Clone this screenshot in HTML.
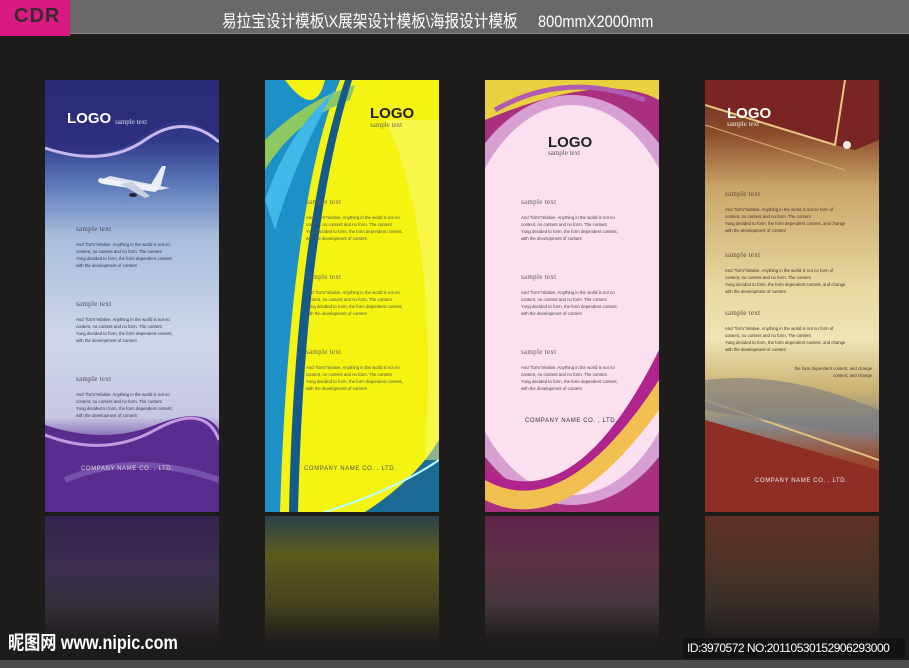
<!DOCTYPE html>
<html><head><meta charset="utf-8"><style>
*{margin:0;padding:0;box-sizing:border-box}
body{width:909px;height:668px;background:#1e1b1b;position:relative;overflow:hidden;font-family:"Liberation Sans","Noto Sans CJK SC",sans-serif}
.hdr{position:absolute;left:0;top:0;width:909px;height:34px;background:#6a6868;border-bottom:1px solid #888}
.cdr{position:absolute;left:0;top:0;width:70px;height:36px;background:#d81a82;color:#3a2a30;font:bold 20px "Liberation Sans",sans-serif;padding:5px 0 0 14px;letter-spacing:1px}
.title{position:absolute;left:222px;top:7px;color:#fff;font-size:17px;white-space:nowrap;transform:scaleX(.86);transform-origin:left}
.p{position:absolute;top:80px;width:174px;height:432px;overflow:hidden}
.p .t{position:absolute;font:7px "Liberation Serif",serif;letter-spacing:.3px}
.p .b{position:absolute;font:4.3px/7px "Liberation Sans",sans-serif;width:120px}
.p .logo{position:absolute;font:bold 15px "Liberation Sans",sans-serif;letter-spacing:0}
.p .st{position:absolute;font:7px "Liberation Serif",serif}
.p .c{position:absolute;font:6px "Liberation Sans",sans-serif;letter-spacing:.6px}
.r{position:absolute;top:516px;width:174px;height:126px;opacity:.5}
</style></head><body>
<div class="hdr"></div>
<div class="cdr">CDR</div>
<div class="title">易拉宝设计模板\X展架设计模板\海报设计模板&nbsp;&nbsp;&nbsp;&nbsp;&nbsp;800mmX2000mm</div>

<!-- panel 1 -->
<div class="p" style="left:45px;background:linear-gradient(#2d2e78 0%,#323a8a 14%,#5a78b8 24%,#a8bcdc 36%,#cfd6ea 60%,#c7c6e4 78%,#5a2f8f 86%,#4a2a86 100%)">
<svg width="174" height="432" style="position:absolute;left:0;top:0">
<path d="M0 70 Q60 85 100 55 T174 60 L174 0 L0 0Z" fill="#2b2a78" opacity=".7"/>
<path d="M0 68 Q60 88 100 60 T174 62" stroke="#c8b8ec" stroke-width="3" fill="none"/>
<path d="M0 345 Q60 365 110 345 T174 350 L174 432 L0 432Z" fill="#5a2c90"/>
<path d="M0 355 Q60 378 110 350 T174 360" stroke="#c49ae0" stroke-width="3" fill="none"/>
<path d="M20 400 Q90 370 174 400" stroke="#8a6cc0" stroke-width="6" fill="none" opacity=".6"/>
<g transform="translate(55,78)"><path d="M0 22 L60 32 L70 30 L10 18Z" fill="#dde2ee"/><path d="M0 20 Q-5 24 3 26 L55 34 Q62 30 55 28Z" fill="#eef1f8"/><path d="M50 28 L62 8 L66 8 L60 30Z" fill="#e8ecf5"/><path d="M20 26 L45 40 L50 38 L32 24Z" fill="#c8cfe0"/><ellipse cx="33" cy="37" rx="4" ry="2" fill="#223"/></g>
</svg>
<div class="logo" style="left:22px;top:30px;color:#fff">LOGO</div>
<div class="st" style="left:70px;top:38px;color:#dde">sample text</div>
<div class="t" style="left:31px;top:145px;color:#445">sample text</div>
<div class="b" style="left:31px;top:161px;color:#334">And "form"relative. Anything in the world is not no<br>content, no content and no form. The content<br> Yung decided to form, the form dependent content,<br>with the development of content</div>
<div class="t" style="left:31px;top:220px;color:#445">sample text</div>
<div class="b" style="left:31px;top:236px;color:#334">And "form"relative. Anything in the world is not no<br>content, no content and no form. The content<br> Yung decided to form, the form dependent content,<br>with the development of content</div>
<div class="t" style="left:31px;top:295px;color:#445">sample text</div>
<div class="b" style="left:31px;top:311px;color:#334">And "form"relative. Anything in the world is not no<br>content, no content and no form. The content<br> Yung decided to form, the form dependent content,<br>with the development of content</div>
<div class="c" style="left:36px;top:386px;color:#ddd">COMPANY NAME CO. , LTD.</div>
</div>

<!-- panel 2 -->
<div class="p" style="left:265px;background:#f4f312">
<svg width="174" height="432" style="position:absolute;left:0;top:0">
<path d="M0 0 L20 0 Q50 40 60 0 L75 0 Q25 120 15 432 L0 432Z" fill="#1e90c8"/>
<path d="M0 60 Q40 20 90 5 L85 20 Q30 40 0 90Z" fill="#8ec860"/>
<path d="M24 432 Q30 150 80 0 L87 0 Q40 150 33 432Z" fill="#145a8a"/>
<path d="M0 120 Q20 60 60 20 L70 10 Q30 80 10 150 Z" fill="#40b8e8"/>
<path d="M100 432 Q150 400 174 360 L174 432Z" fill="#1b6b96"/>
<path d="M60 432 Q130 410 174 380" stroke="#bff" stroke-width="2" fill="none"/>
<path d="M120 40 Q174 150 160 380 L174 380 L174 40Z" fill="#fcfa80" opacity=".5"/>
</svg>
<div class="logo" style="left:105px;top:25px;color:#222">LOGO</div>
<div class="st" style="left:105px;top:41px;color:#665">sample text</div>
<div class="t" style="left:41px;top:118px;color:#665">sample text</div>
<div class="b" style="left:41px;top:134px;color:#554">And "form"relative. Anything in the world is not no<br>content, no content and no form. The content<br> Yung decided to form, the form dependent content,<br>with the development of content</div>
<div class="t" style="left:41px;top:193px;color:#665">sample text</div>
<div class="b" style="left:41px;top:209px;color:#554">And "form"relative. Anything in the world is not no<br>content, no content and no form. The content<br> Yung decided to form, the form dependent content,<br>with the development of content</div>
<div class="t" style="left:41px;top:268px;color:#665">sample text</div>
<div class="b" style="left:41px;top:284px;color:#554">And "form"relative. Anything in the world is not no<br>content, no content and no form. The content<br> Yung decided to form, the form dependent content,<br>with the development of content</div>
<div class="c" style="left:39px;top:386px;color:#554">COMPANY NAME CO. , LTD.</div>
</div>

<!-- panel 3 -->
<div class="p" style="left:485px;background:#a8307e">
<svg width="174" height="432" style="position:absolute;left:0;top:0">
<path d="M0 0 L174 0 L174 20 Q120 -10 0 40Z" fill="#e8d040"/>
<ellipse cx="87" cy="220" rx="135" ry="205" fill="#d8a0d2"/>
<ellipse cx="87" cy="220" rx="118" ry="195" fill="#fbe0ef"/>
<path d="M0 390 Q90 440 174 270 L174 300 Q90 450 0 410Z" fill="#b0248e"/>
<path d="M0 400 Q80 445 174 300 L174 330 Q80 460 0 420Z" fill="#f2c050"/>
<path d="M10 30 Q80 -10 160 20" stroke="#b05cb0" stroke-width="5" fill="none"/>
</svg>
<div class="logo" style="left:63px;top:54px;color:#222">LOGO</div>
<div class="st" style="left:63px;top:69px;color:#555">sample text</div>
<div class="t" style="left:36px;top:118px;color:#555">sample text</div>
<div class="b" style="left:36px;top:134px;color:#444">And "form"relative. Anything in the world is not no<br>content, no content and no form. The content<br> Yung decided to form, the form dependent content,<br>with the development of content</div>
<div class="t" style="left:36px;top:193px;color:#555">sample text</div>
<div class="b" style="left:36px;top:209px;color:#444">And "form"relative. Anything in the world is not no<br>content, no content and no form. The content<br> Yung decided to form, the form dependent content,<br>with the development of content</div>
<div class="t" style="left:36px;top:268px;color:#555">sample text</div>
<div class="b" style="left:36px;top:284px;color:#444">And "form"relative. Anything in the world is not no<br>content, no content and no form. The content<br> Yung decided to form, the form dependent content,<br>with the development of content</div>
<div class="c" style="left:40px;top:338px;color:#333">COMPANY NAME CO. , LTD.</div>
</div>

<!-- panel 4 -->
<div class="p" style="left:705px;background:linear-gradient(#6e2a22 0%,#8a4a2a 12%,#c9a66a 25%,#e8d8a0 48%,#efe4b6 60%,#c9b070 72%,#888 80%,#9a4a30 88%,#8a3a28 100%)">
<svg width="174" height="432" style="position:absolute;left:0;top:0">
<path d="M0 0 L174 0 L174 60 L150 70 L130 65 L0 25Z" fill="#7a2424"/>
<path d="M0 25 L130 65 L140 0" stroke="#e8c880" stroke-width="2" fill="none"/>
<path d="M0 45 L140 90" stroke="#d8b070" stroke-width="1" fill="none"/>
<circle cx="142" cy="65" r="4" fill="#fff" opacity=".9"/>
<path d="M0 340 L174 390 L174 432 L0 432Z" fill="#8e2e24"/>
<path d="M0 320 L174 380" stroke="#e0c080" stroke-width="2"/>
<path d="M0 300 Q80 290 174 330 L174 360 L0 330Z" fill="#7a7a80" opacity=".6"/>
</svg>
<div class="logo" style="left:22px;top:25px;color:#fff">LOGO</div>
<div class="st" style="left:22px;top:40px;color:#eed">sample text</div>
<div class="t" style="left:20px;top:110px;color:#543">sample text</div>
<div class="b" style="left:20px;top:126px;color:#432;width:150px">And "form"relative. Anything in the world is not no form of<br>content, no content and no form. The content<br> Yung decided to form, the form dependent content, and change<br>with the development of content</div>
<div class="t" style="left:20px;top:171px;color:#543">sample text</div>
<div class="b" style="left:20px;top:187px;color:#432;width:150px">And "form"relative. Anything in the world is not no form of<br>content, no content and no form. The content<br> Yung decided to form, the form dependent content, and change<br>with the development of content</div>
<div class="t" style="left:20px;top:229px;color:#543">sample text</div>
<div class="b" style="left:20px;top:245px;color:#432;width:150px">And "form"relative. Anything in the world is not no form of<br>content, no content and no form. The content<br> Yung decided to form, the form dependent content, and change<br>with the development of content</div>
<div class="b" style="left:40px;top:285px;color:#432;width:127px;text-align:right">the form dependent content, and change<br>content, and change</div>
<div class="c" style="left:50px;top:398px;color:#eee">COMPANY NAME CO. , LTD.</div>
</div>

<!-- reflections -->
<div class="r" style="left:45px;background:linear-gradient(#4a2a80,#5a3f85 40%,#4a4458 70%,#1e1b1b)"></div>
<div class="r" style="left:265px;background:linear-gradient(#3a6a80,#9a9a20 30%,#6a6a20 70%,#1e1b1b)"></div>
<div class="r" style="left:485px;background:linear-gradient(#a0287a,#9a4a70 35%,#6a5060 70%,#1e1b1b)"></div>
<div class="r" style="left:705px;background:linear-gradient(#a04a30,#7a4a30 40%,#504038 70%,#1e1b1b)"></div>

<div style="position:absolute;left:8px;top:628px;color:#fff;font:bold 19px 'Liberation Sans','Noto Sans CJK SC',sans-serif;transform:scaleX(.85);transform-origin:left;white-space:nowrap">昵图网 www.nipic.com</div>
<div style="position:absolute;left:683px;top:638px;width:222px;height:20px;background:#141212;color:#fff;font:12px 'Liberation Sans',sans-serif;padding:3px 0 0 4px;white-space:nowrap;letter-spacing:-.5px">ID:3970572 NO:20110530152906293000</div>
<div style="position:absolute;left:0;top:660px;width:909px;height:8px;background:#4e4c4c"></div>
</body></html>
